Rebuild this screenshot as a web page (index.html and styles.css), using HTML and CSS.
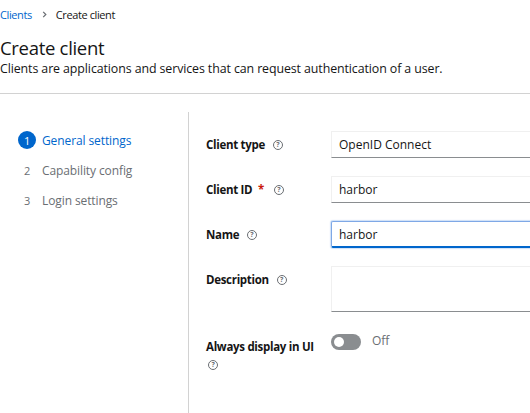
FILE: index.html
```html
<!DOCTYPE html>
<html>
<head>
<meta charset="utf-8">
<link rel="stylesheet" href="styles.css">
</head>
<body>
<header class="page-header">
  <nav class="breadcrumb">
    <a class="crumb-link">Clients</a>
    <svg class="crumb-sep" viewBox="0 0 8 8" width="7" height="7"><path d="M2.5 1 L5.5 4 L2.5 7" fill="none" stroke="#6a6e73" stroke-width="1.4"/></svg>
    <span class="crumb-current">Create client</span>
  </nav>
  <h1 class="title">Create client</h1>
  <p class="subtitle">Clients are applications and services that can request authentication of a user.</p>
</header>
<main class="wizard">
  <ol class="steps">
    <li class="step active"><span class="step-num">1</span><span class="step-label">General settings</span></li>
    <li class="step"><span class="step-num">2</span><span class="step-label">Capability config</span></li>
    <li class="step"><span class="step-num">3</span><span class="step-label">Login settings</span></li>
  </ol>
  <form class="form">
    <div class="label">Client type <span class="help"></span></div>
    <div class="control"><div class="input">OpenID Connect</div></div>

    <div class="label">Client ID <span class="req">*</span> <span class="help"></span></div>
    <div class="control"><div class="input">harbor</div></div>

    <div class="label">Name <span class="help"></span></div>
    <div class="control"><div class="input focused">harbor</div></div>

    <div class="label">Description <span class="help"></span></div>
    <div class="control"><div class="input textarea"></div></div>

    <div class="label label-switch">Always display in UI <span class="help"></span></div>
    <div class="control control-switch"><span class="switch"><span class="knob"></span></span><span class="switch-text">Off</span></div>
  </form>
</main>
</body>
</html>
```
FILE: styles.css
```css
html, body {
  margin: 0;
  padding: 0;
  background: #fff;
  overflow: hidden;
  width: 530px;
  height: 413px;
}
body {
  font-family: "Open Sans", "Noto Sans", sans-serif;
  color: #151515;
  font-size: 12px;
}
.page-header {
  border-bottom: 1px solid #d2d2d2;
  height: 94px;
  box-sizing: border-box;
  padding-top: 6px;
}
.breadcrumb {
  display: flex;
  align-items: center;
  height: 16px;
  font-size: 11px;
  letter-spacing: -0.4px;
}
.crumb-link { color: #0066cc; }
.crumb-sep { margin: 0 8px 0 9px; }
.crumb-current { color: #151515; }
.title {
  margin: 14px 0 0 0;
  font-size: 18.5px;
  font-weight: 400;
  line-height: 24px;
  letter-spacing: -0.3px;
}
.subtitle {
  margin: 1px 0 0 0;
  font-size: 12.4px;
  line-height: 16px;
  letter-spacing: -0.1px;
}
.wizard {
  display: flex;
  margin-top: 18px;
  width: 530px;
  overflow: hidden;
}
.steps {
  flex-shrink: 0;
  list-style: none;
  margin: 0;
  padding: 19px 0 0 18px;
  width: 170px;
  height: 300px;
  border-right: 1px solid #d2d2d2;
  box-sizing: content-box;
}
.step {
  display: flex;
  align-items: center;
  height: 18px;
  margin-bottom: 12px;
  color: #6a6e73;
  font-size: 12px;
  letter-spacing: -0.1px;
}
.step-num {
  width: 18px;
  height: 18px;
  display: inline-flex;
  align-items: center;
  justify-content: center;
  border-radius: 50%;
  margin-right: 6px;
  font-size: 11px;
}
.step.active { color: #0066cc; }
.step.active .step-num {
  background: #0066cc;
  color: #fff;
}
.form {
  flex: 1;
  min-width: 0;
  overflow: hidden;
  display: grid;
  grid-template-columns: 125px 1fr;
  row-gap: 18px;
  padding: 19px 0 0 17px;
  align-content: start;
}
.label {
  font-weight: 700;
  font-size: 11.5px;
  line-height: 18px;
  padding-top: 5px;
  padding-right: 8px;
  letter-spacing: -0.3px;
}
.req {
  color: #c9190b;
  margin-left: 3px;
  margin-right: 2px;
}
.help {
  display: inline-block;
  width: 8px;
  height: 8px;
  border: 1px solid #6a6e73;
  border-radius: 50%;
  vertical-align: -1px;
  margin-left: 5px;
  position: relative;
}
.help::after {
  content: "?";
  position: absolute;
  left: 0;
  top: 0;
  width: 8px;
  height: 8px;
  font-size: 7px;
  line-height: 8px;
  text-align: center;
  color: #6a6e73;
  font-weight: 700;
}
.label-switch { padding-top: 8px; }
.label-switch .help { margin-left: 2px; }
.control { min-width: 0; }
.input {
  height: 27px;
  box-sizing: border-box;
  border: 1px solid #f0f0f0;
  border-right: none;
  border-bottom-color: #8a8d90;
  padding: 0 7px;
  display: flex;
  align-items: center;
  font-size: 12px;
  width: 100%;
}
.input.focused {
  border: 1px solid #7fa8e6;
  border-right: none;
  border-bottom: 2px solid #0066cc;
  box-shadow: 0 0 1px 1px rgba(115,165,232,0.35);
  border-radius: 2px 0 0 2px;
}
.input.textarea { height: 46px; }
.control-switch {
  display: flex;
  align-items: flex-start;
  padding-top: 4px;
}
.switch {
  width: 30px;
  height: 16px;
  border-radius: 8px;
  background: #8a8d90;
  position: relative;
  display: inline-block;
}
.knob {
  position: absolute;
  left: 3px;
  top: 3px;
  width: 10px;
  height: 10px;
  border-radius: 50%;
  background: #fff;
}
.switch-text {
  margin-left: 11px;
  color: #6a6e73;
  font-size: 12px;
  line-height: 16px;
  margin-top: -1px;
}
```
